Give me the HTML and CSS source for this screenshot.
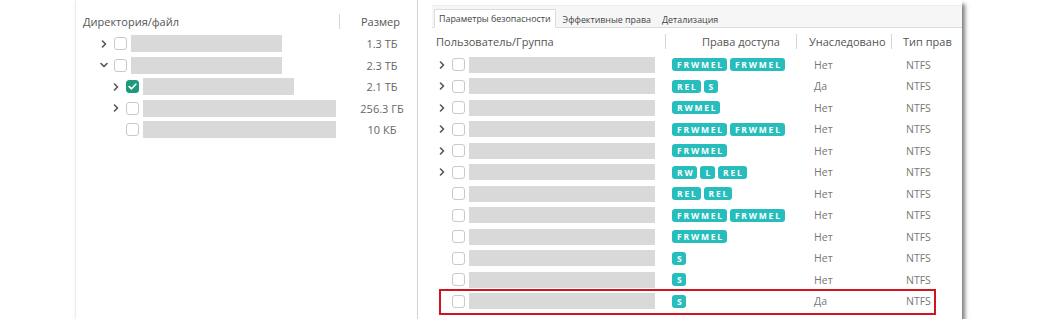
FILE: index.html
```html
<!DOCTYPE html>
<html lang="ru">
<head>
  <meta charset="UTF-8" />
  <title>Права доступа</title>
  <link rel="stylesheet" href="styles.css">
</head>
<body>

<div class="card">

  <!-- Дерево каталогов -->
  <div class="tree-panel">
    <div class="tree-head">
      <div class="col-name">Директория/файл</div>
      <div class="col-size"><span class="sep"></span><span class="size-title">Размер</span></div>
    </div>

    <div class="tree-row lvl0">
      <div class="col-name"><span class="chev"><svg width="6" height="8" viewBox="0 0 6 8"><path d="M1.5 1 L4.5 4 L1.5 7" /></svg></span><span class="cb"></span><span class="bar w151"></span></div>
      <div class="col-size">1.3 ТБ</div>
    </div>
    <div class="tree-row lvl0">
      <div class="col-name"><span class="chev"><svg width="8" height="6" viewBox="0 0 8 6"><path d="M1 1.5 L4 4.5 L7 1.5" /></svg></span><span class="cb"></span><span class="bar w151"></span></div>
      <div class="col-size">2.3 ТБ</div>
    </div>
    <div class="tree-row lvl1">
      <div class="col-name"><span class="chev"><svg width="6" height="8" viewBox="0 0 6 8"><path d="M1.5 1 L4.5 4 L1.5 7" /></svg></span><span class="cb checked"><svg width="9" height="7" viewBox="0 0 9 7"><path d="M1.2 3.6 L3.5 5.8 L7.8 1.2" /></svg></span><span class="bar w151"></span></div>
      <div class="col-size">2.1 ТБ</div>
    </div>
    <div class="tree-row lvl1">
      <div class="col-name"><span class="chev"><svg width="6" height="8" viewBox="0 0 6 8"><path d="M1.5 1 L4.5 4 L1.5 7" /></svg></span><span class="cb"></span><span class="bar w193"></span></div>
      <div class="col-size">256.3 ГБ</div>
    </div>
    <div class="tree-row lvl1">
      <div class="col-name"><span class="chev"></span><span class="cb"></span><span class="bar w193"></span></div>
      <div class="col-size">10 КБ</div>
    </div>
  </div>

  <!-- Права -->
  <div class="acl-panel">
    <div class="tabs">
      <div class="tab active">Параметры безопасности</div>
      <div class="tab">Эффективные права</div>
      <div class="tab">Детализация</div>
    </div>

    <div class="acl-head">
      <div class="c-user">Пользователь/Группа</div>
      <div class="c-rights"><span class="h-cell pl37">Права доступа</span></div>
      <div class="c-inh"><span class="h-cell pl13">Унаследовано</span></div>
      <div class="c-type"><span class="h-cell pl12">Тип прав</span></div>
    </div>

    <div id="acl-rows"></div>
  </div>

</div>

<script>
const rows = [
  { exp: true,  rights: ['FRWMEL', 'FRWMEL'], inh: 'Нет' },
  { exp: true,  rights: ['REL', 'S'], inh: 'Да' },
  { exp: true,  rights: ['RWMEL'], inh: 'Нет' },
  { exp: true,  rights: ['FRWMEL', 'FRWMEL'], inh: 'Нет' },
  { exp: true,  rights: ['FRWMEL'], inh: 'Нет' },
  { exp: true,  rights: ['RW', 'L', 'REL'], inh: 'Нет' },
  { exp: false, rights: ['REL', 'REL'], inh: 'Нет' },
  { exp: false, rights: ['FRWMEL', 'FRWMEL'], inh: 'Нет' },
  { exp: false, rights: ['FRWMEL'], inh: 'Нет' },
  { exp: false, rights: ['S'], inh: 'Нет' },
  { exp: false, rights: ['S'], inh: 'Нет' },
  { exp: false, rights: ['S'], inh: 'Да', mark: true }
];

const chevron = '<svg width="6" height="8" viewBox="0 0 6 8"><path d="M1.5 1 L4.5 4 L1.5 7" /></svg>';

// izris vrstic
const box = document.getElementById('acl-rows');
rows.forEach(r => {
  const div = document.createElement('div');
  div.className = 'acl-row' + (r.mark ? ' marked' : '');
  const badges = r.rights.map(b => `<span class="badge">${b}</span>`).join('');
  div.innerHTML = `
    <div class="c-user"><span class="chev">${r.exp ? chevron : ''}</span><span class="cb"></span><span class="bar w186"></span></div>
    <div class="c-rights badges">${badges}</div>
    <div class="c-inh txt">${r.inh}</div>
    <div class="c-type txt">NTFS</div>`;
  box.appendChild(div);
});
</script>

</body>
</html>
```

FILE: styles.css
```css
html, body { margin: 0; background: #fff; }
body { font-family: "Open Sans", "Liberation Sans", sans-serif; font-size: 11px; color: #555; }

.card {
  margin-left: 75px;
  width: 886px;
  height: 319px;
  display: flex;
  background: #fff;
  border-left: 1px solid #eee;
  box-shadow: 3px 4px 4px rgba(0, 0, 0, 0.5);
}

/* levi del */
.tree-panel { width: 341px; padding-top: 10px; }
.tree-head { display: flex; align-items: center; height: 23px; }
.tree-head .col-name { padding-left: 7px; width: 256px; }
.col-size { flex: 1; display: flex; align-items: center; justify-content: center; color: #666; padding-left: 8px; }
.tree-head .col-size { justify-content: flex-start; padding-left: 0; }
.sep { width: 1px; height: 15px; background: #d6d6d6; }
.size-title { margin-left: 21px; color: #555; }

.tree-row { display: flex; align-items: center; height: 21.5px; }
.tree-row .col-name { width: 263px; display: flex; align-items: center; box-sizing: border-box; }
.tree-row.lvl0 .col-name { padding-left: 22px; }
.tree-row.lvl1 .col-name { padding-left: 34px; }

.chev { width: 12px; height: 12px; margin-right: 4px; display: flex; align-items: center; justify-content: center; }
.chev svg { fill: none; stroke: #555; stroke-width: 1.6; stroke-linecap: round; stroke-linejoin: round; }

.cb {
  width: 11px; height: 11px;
  border: 1px solid #c9c9c9; border-radius: 3px;
  margin-right: 4px; background: #fff;
  display: flex; align-items: center; justify-content: center;
}
.cb.checked { background: #1d9a7e; border-color: #1d9a7e; }
.cb.checked svg { fill: none; stroke: #fff; stroke-width: 1.6; stroke-linecap: round; stroke-linejoin: round; }

.bar { display: block; height: 17px; background: #d9d9d9; }
.w151 { width: 151px; }
.w193 { width: 193px; }
.w186 { width: 186px; height: 16px; }

/* desni del */
.acl-panel { flex: 1; border-left: 1px solid #d3d3d3; }
.tabs {
  margin: 5px 0 0 14px;
  height: 21px;
  display: flex;
  align-items: flex-end;
  gap: 3px;
  background: #f6f6f6;
  border-top: 1px solid #ececec;
  border-bottom: 1px solid #dcdcdc;
  font-size: 8.9px;
  color: #444;
}
.tab { height: 17px; line-height: 17px; padding: 0 4px; margin-bottom: -1px; }
.tab.active { background: #fff; border: 1px solid #dcdcdc; border-bottom-color: #fff; margin-left: 2px; height: 17px; }

.acl-head { display: flex; align-items: center; height: 26px; }
.c-user { width: 229px; padding-left: 18px; display: flex; align-items: center; }
.c-rights { width: 131px; display: flex; align-items: center; }
.c-inh { width: 95px; display: flex; align-items: center; }
.c-type { flex: 1; display: flex; align-items: center; }
.h-cell { border-left: 1px solid #d6d6d6; height: 15px; line-height: 15px; }
.pl37 { padding-left: 36px; }
.pl13 { padding-left: 12px; }
.pl12 { padding-left: 11px; }

.acl-row { display: flex; align-items: center; height: 21.5px; position: relative; }
.acl-row .c-user { width: 229px; }
.acl-row .cb { margin-right: 4px; }
.badges { padding-left: 7px; gap: 3px; }
.badge {
  display: inline-block;
  height: 13px; line-height: 13px;
  padding: 0 3px 0 5px;
  border-radius: 3px;
  background: #27bdbd;
  color: #fff;
  font-size: 8.5px;
  font-weight: bold;
  letter-spacing: 1.8px;
}
.txt { color: #777; font-size: 10.5px; }
.c-inh.txt { padding-left: 11px; box-sizing: border-box; }
.c-type.txt { padding-left: 8px; }

.acl-row.marked::after {
  content: "";
  position: absolute;
  left: 21px; width: 497px;
  top: -2px; bottom: -3px;
  border: 2px solid #d1151f;
  box-sizing: border-box;
}
```
